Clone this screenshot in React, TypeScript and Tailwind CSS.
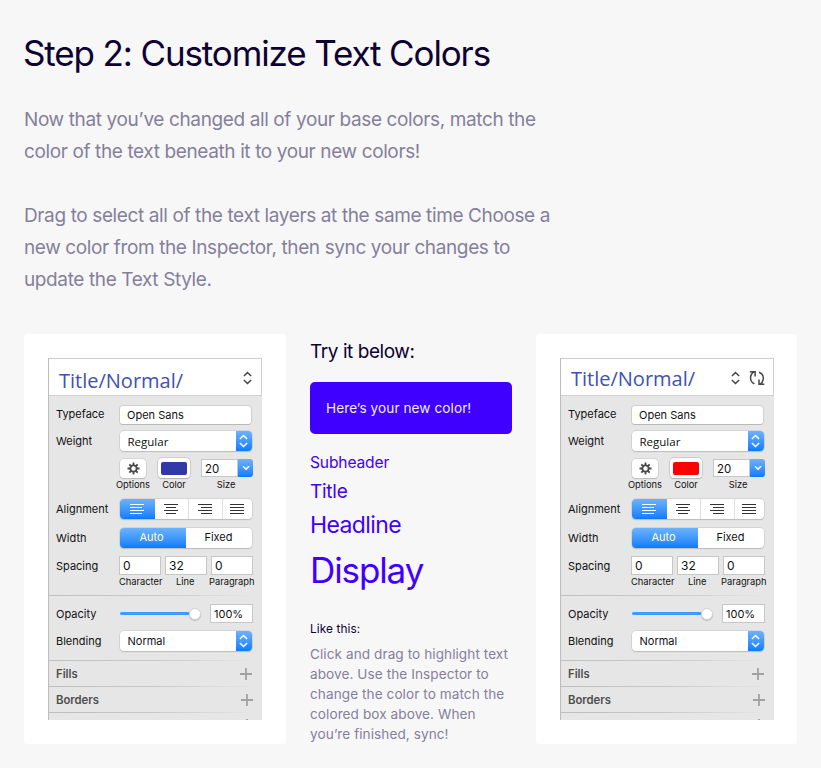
import type { ReactNode } from "react";

function UpDown({ className = "" }: { className?: string }) {
  return (
    <svg width="9" height="14" viewBox="0 0 9 14" fill="none" stroke="currentColor" strokeWidth="1.5" className={className}>
      <path d="M.9 5 4.500 1.500l3.600 3.500M.9 9l3.600 3.500L8.100 9" />
    </svg>
  );
}

function SyncIcon() {
  return (
    <svg width="16" height="16" viewBox="0 0 16 16" fill="none" stroke="#484848" strokeWidth="1.5">
      <path d="M5.400 13.800C2.500 12.500 1.300 9.600 1.600 6.800 1.800 4.900 2.900 3 5.200 1.700M.8 1.700h5.300v4.700" />
      <path d="M10 2.200c3.100 1.200 4.600 3.900 4.300 6.800-.2 2-1.300 3.900-3.500 5.300M15.300 14.300H10V9.500" />
    </svg>
  );
}

function Gear() {
  return (
    <svg width="13" height="13" viewBox="-6.500 -6.500 13 13" fill="none" stroke="#4a4a4a">
      <circle r="3.100" strokeWidth="1.700" />
      <path
        strokeWidth="1.800"
        d="M0-3.500V-6M0 3.500V6M-3.500 0H-6M3.500 0H6M-2.500-2.500-4.200-4.200M2.500 2.500 4.200 4.200M-2.500 2.500-4.200 4.200M2.500-2.500 4.200-4.200"
      />
    </svg>
  );
}

const alignLines = [
  [[0, 14], [0, 12], [0, 14], [0, 12]],
  [[0, 14], [2, 12], [0, 14], [2, 12]],
  [[0, 14], [3, 14], [0, 14], [3, 14]],
  [[0, 14], [0, 14], [0, 14], [0, 14]],
];

function AlignIcon({ kind }: { kind: number }) {
  return (
    <svg width="14" height="10" viewBox="0 0 14 10" stroke="currentColor" strokeWidth="1">
      {alignLines[kind].map(([a, b], i) => (
        <path key={i} d={`M${a} ${i * 3 + 0.5}H${b}`} />
      ))}
    </svg>
  );
}

function Field({ children }: { children: ReactNode }) {
  return (
    <div className="flex h-5 w-[133px] items-center overflow-hidden rounded-[4px] border border-[#cfcfcf] border-b-[#b9b9b9] bg-white pl-[7px] leading-[20px]">
      {children}
    </div>
  );
}

function Select({ value, className }: { value: string; className: string }) {
  return (
    <div className="flex h-5 w-[132px] overflow-hidden rounded-[4px] bg-white shadow-[0_0_0_0.5px_#c4c4c4,0_1px_1px_#b5b5b5]">
      <span className={`flex-1 pl-[8px] ${className}`}>{value}</span>
      <span className="flex w-4 items-center justify-center bg-linear-to-b from-[#6ab3fb] to-[#067bff] text-white">
        <UpDown />
      </span>
    </div>
  );
}

function Row({
  label,
  className,
  labelClass = "leading-[20px]",
  gap = "ml-[7.5px]",
  children,
}: {
  label: string;
  className: string;
  labelClass?: string;
  gap?: string;
  children: ReactNode;
}) {
  return (
    <div className={`flex items-start ${className}`}>
      <span className={`w-[63px] shrink-0 pl-[7px] whitespace-nowrap ${labelClass}`}>{label}</span>
      <div className={gap}>{children}</div>
    </div>
  );
}

function Divider() {
  return <div className="h-px w-[207px] bg-linear-to-r from-[#bdbdbd] via-[#c8c8c8] to-[#e6e6e6]" />;
}

function Plus() {
  return (
    <svg width="12" height="12" viewBox="0 0 12 12" stroke="#a2a2a2" strokeWidth="1.800">
      <path d="M6 0v12M0 6h12" />
    </svg>
  );
}

function SpacingInput({ value }: { value: string }) {
  return <div className="h-[19px] w-[42px] border border-[#c6c6c6] bg-white pl-[3px] text-[12px] leading-[18px]">{value}</div>;
}

function Inspector({ sync = false }: { sync?: boolean }) {
  return (
    <div className={`h-[410px] shrink-0 rounded-[3px] bg-white pt-6 pl-6 ${sync ? "w-[261px]" : "w-[262px]"}`}>
      <div className="h-[362px] w-[214px] overflow-hidden border-l border-[#bcbcbc] bg-[#e6e6e6] text-[11px] text-[#111]">
        <div className="flex h-[38px] border-t border-r border-b border-[#cecece] bg-white">
          <span
            className={`flex-1 pl-[10px] font-['Open_Sans',sans-serif] text-[20px] text-[#3f51b5] ${sync ? "leading-[39px]" : "leading-[43px]"}`}
          >
            Title/Normal/
          </span>
          <div className={`flex h-[37px] items-center gap-[9px] ${sync ? "pr-[8px]" : "pr-[9px]"}`}>
            <UpDown className="text-[#444]" />
            {sync && <SyncIcon />}
          </div>
        </div>

        <Row label="Typeface" className="mt-[9px]" labelClass="leading-[18px]" gap="ml-[7px]">
          <Field>Open Sans</Field>
        </Row>
        <Row label="Weight" className="mt-[6px]">
          <Select value="Regular" className="font-['Open_Sans',sans-serif] text-[11.500px] leading-[22px]" />
        </Row>
        <div className="mt-[7px] ml-[71px] flex h-5 items-center">
          <div className="flex h-[19px] w-[26px] items-center justify-center rounded-[4px] bg-white shadow-[0_0_0_0.5px_#c4c4c4,0_1px_1px_#b5b5b5]">
            <Gear />
          </div>
          <div className="ml-[12px] flex h-5 w-[32px] items-center justify-center rounded-[4px] bg-white shadow-[0_0_0_0.5px_#b4b4b4,0_1px_1px_#b5b5b5]">
            <div className={`h-[13px] w-[26px] rounded-[2px] ${sync ? "bg-[#ff0000]" : "bg-[#3139a6]"}`} />
          </div>
          <div className="ml-[11px] flex h-[18px] w-[52px]">
            <div className="flex-1 border border-[#c6c6c6] bg-white pl-[3px] text-[11.500px] leading-[18px]">20</div>
            <div className="flex w-[15px] items-center justify-center rounded-r-[3px] bg-linear-to-b from-[#6ab3fb] to-[#067bff]">
              <svg width="8" height="6" viewBox="0 0 8 6" fill="none" stroke="white" strokeWidth="1.600">
                <path d="m1 1.200 3 3 3-3" />
              </svg>
            </div>
          </div>
        </div>
        <div className="ml-[66px] flex text-[9.300px] leading-[14px]">
          <span className="w-[36px] text-center">Options</span>
          <span className="w-[46px] text-center">Color</span>
          <span className="w-[58px] text-center">Size</span>
        </div>
        <Row label="Alignment" className="mt-[7px]">
          <div className="flex h-5 w-[132px] overflow-hidden rounded-[4px] bg-white text-[#333] shadow-[0_0_0_0.5px_#c4c4c4,0_1px_1px_#b5b5b5]">
            <div className="flex w-[35px] items-center justify-center bg-linear-to-b from-[#6ab3fb] to-[#067bff] text-white">
              <AlignIcon kind={0} />
            </div>
            <div className="flex w-[34px] items-center justify-center border-r border-[#ddd]">
              <AlignIcon kind={1} />
            </div>
            <div className="flex w-[34px] items-center justify-center border-r border-[#ddd]">
              <AlignIcon kind={2} />
            </div>
            <div className="flex w-[29px] items-center justify-center">
              <AlignIcon kind={3} />
            </div>
          </div>
        </Row>
        <Row label="Width" className="mt-[9px]">
          <div className="flex h-5 w-[132px] overflow-hidden rounded-[4px] bg-white text-center leading-[19px] shadow-[0_0_0_0.5px_#c4c4c4,0_1px_1px_#b5b5b5]">
            <div className="w-[66px] bg-linear-to-b from-[#6ab3fb] to-[#067bff] pr-[2px] text-white">Auto</div>
            <div className="w-[66px]">Fixed</div>
          </div>
        </Row>
        <Row label="Spacing" className="mt-[8px]" gap="ml-[7px]">
          <div className="flex h-[19px] gap-[4px]">
            <SpacingInput value="0" />
            <SpacingInput value="32" />
            <SpacingInput value="0" />
          </div>
        </Row>
        <div className="-mt-px ml-[70px] flex h-[14px] text-[9.300px] leading-[14px] whitespace-nowrap">
          <span className="w-[57px]">Character</span>
          <span className="w-[33px]">Line</span>
          <span>Paragraph</span>
        </div>
        <div className="h-[6px]" />
        <Divider />
        <Row label="Opacity" className="mt-[8px]" gap="ml-[7px]">
          <div className="flex h-[20px] items-start">
            <div className="ml-px flex h-[19px] w-[81px] items-center">
              <div className="h-[3px] w-[69px] rounded-l-full bg-[#3f9bfd]" />
              <div className="h-[12px] w-[12px] rounded-full border border-[#d2d2d2] bg-white shadow-[0_1px_1px_#bbb]" />
            </div>
            <div className="ml-[9px] h-[19px] w-[43px] border border-[#c6c6c6] bg-white pl-[3px] leading-[18px]">100%</div>
          </div>
        </Row>
        <Row label="Blending" className="mt-[7px]">
          <Select value="Normal" className="text-[11px] leading-[20px]" />
        </Row>
        <div className="h-[9px]" />
        <Divider />
        <div className="flex h-[25px] items-center justify-between pr-[10px] pl-[7px] text-[11.300px] font-semibold text-[#4d4d4d]">
          <span className="pt-px">Fills</span>
          <Plus />
        </div>
        <Divider />
        <div className="flex h-[25px] items-center justify-between pr-[9px] pl-[7px] text-[11.300px] font-semibold text-[#4d4d4d]">
          <span className="pt-px">Borders</span>
          <Plus />
        </div>
        <Divider />
        <div className="ml-[192px] h-[12px] pt-[6px]">
          <Plus />
        </div>
      </div>
    </div>
  );
}

export default function App() {
  return (
    <main className="h-[768px] w-[821px] overflow-hidden bg-[#f7f7f7] px-6 pt-[29px] font-['Inter',sans-serif] text-[#857f9b]">
      <h1 className="-ml-px text-[35px] leading-[48px] tracking-[-1.13px] whitespace-nowrap text-[#0d0033]">Step 2: Customize Text Colors</h1>
      <div className="mt-[27px] h-[230px] text-[19px] leading-8 tracking-[-0.38px] whitespace-nowrap">
        <p>
          Now that you’ve changed all of your base colors, match the
          <br />
          color of the text beneath it to your new colors!
        </p>
        <p className="mt-8">
          Drag to select all of the text layers at the same time Choose a
          <br />
          new color from the Inspector, then sync your changes to
          <br />
          update the Text Style.
        </p>
      </div>
      <div className="flex gap-6">
        <Inspector />
        <section className="w-[202px] shrink-0 whitespace-nowrap text-[#3f00ff]">
          <h2 className="pt-[2px] text-[19px] leading-8 tracking-[-0.44px] text-[#0d0033]">Try it below:</h2>
          <div className="mt-[14px] h-[52px] rounded-[5px] bg-[#3f00ff] pl-4 text-[13.600px] leading-[52px] tracking-[0.08px] text-[#f1edff]">
            Here’s your new color!
          </div>
          <div className="mt-[17px] text-[15.600px] leading-6 tracking-[-0.15px]">Subheader</div>
          <div className="mt-[3px] text-[19px] leading-7 tracking-[-0.25px]">Title</div>
          <div className="mt-[3px] text-[23px] leading-8 tracking-[-0.6px]">Headline</div>
          <div className="mt-[5px] text-[35px] leading-[48px] tracking-[-1.1px]">Display</div>
          <div className="mt-[27px] text-[11.800px] leading-4 tracking-[0.1px] text-[#0d0033]">Like this:</div>
          <p className="mt-[7px] text-[13.600px] leading-5 tracking-[0.07px] text-[#857f9b]">
            Click and drag to highlight text
            <br />
            above. Use the Inspector to
            <br />
            change the color to match the
            <br />
            colored box above. When
            <br />
            you’re finished, sync!
          </p>
        </section>
        <Inspector sync />
      </div>
    </main>
  );
}
